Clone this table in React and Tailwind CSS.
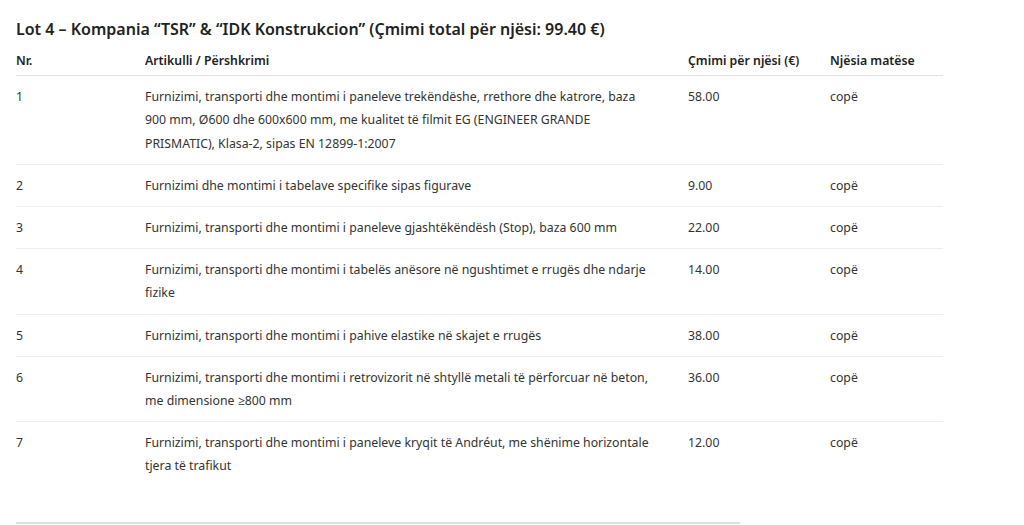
const rows = [
  { nr: '1', text: ['Furnizimi, transporti dhe montimi i paneleve trekëndëshe, rrethore dhe katrore, baza', '900 mm, Ø600 dhe 600x600 mm, me kualitet të filmit EG (ENGINEER GRANDE', 'PRISMATIC), Klasa-2, sipas EN 12899-1:2007'], price: '58.00' },
  { nr: '2', text: ['Furnizimi dhe montimi i tabelave specifike sipas figurave'], price: '9.00' },
  { nr: '3', text: ['Furnizimi, transporti dhe montimi i paneleve gjashtëkëndësh (Stop), baza 600 mm'], price: '22.00' },
  { nr: '4', text: ['Furnizimi, transporti dhe montimi i tabelës anësore në ngushtimet e rrugës dhe ndarje', 'fizike'], price: '14.00' },
  { nr: '5', text: ['Furnizimi, transporti dhe montimi i pahive elastike në skajet e rrugës'], price: '38.00' },
  { nr: '6', text: ['Furnizimi, transporti dhe montimi i retrovizorit në shtyllë metali të përforcuar në beton,', 'me dimensione ≥800 mm'], price: '36.00' },
  { nr: '7', text: ['Furnizimi, transporti dhe montimi i paneleve kryqit të Andréut, me shënime horizontale', 'tjera të trafikut'], price: '12.00' },
]

export default function App() {
  return (
    <div className="bg-white w-[1024px] h-[525px] overflow-hidden px-4 pt-[17px] text-[#333]" style={{ fontFamily: '"Noto Sans", "Open Sans", sans-serif' }}>
      <h2 className="text-[16px] leading-[24px] font-semibold text-[#222] mb-[4px]">
        Lot 4 – Kompania “TSR” &amp; “IDK Konstrukcion” (Çmimi total për njësi: 99.40 €)
      </h2>
      <div className="w-[927px] text-[12.3px] leading-[23.2px]">
        <div className="grid grid-cols-[129px_543px_142px_113px] font-semibold text-[#222] pt-[4px] pb-[3px] border-b border-[#e2e2e2]">
          <div>Nr.</div>
          <div>Artikulli / Përshkrimi</div>
          <div>Çmimi për njësi (€)</div>
          <div>Njësia matëse</div>
        </div>
        {rows.map((r, i) => (
          <div key={r.nr} className={`grid grid-cols-[129px_543px_142px_113px] py-[9px] ${i < rows.length - 1 ? 'border-b border-[#eeeeee]' : ''}`}>
            <div>{r.nr}</div>
            <div className="whitespace-nowrap">
              {r.text.map((t, j) => (
                <div key={j}>{t}</div>
              ))}
            </div>
            <div>{r.price}</div>
            <div>copë</div>
          </div>
        ))}
      </div>
      <div className="mt-[35px] w-[724px] border-t-2 border-[#dddddd]"></div>
    </div>
  )
}
